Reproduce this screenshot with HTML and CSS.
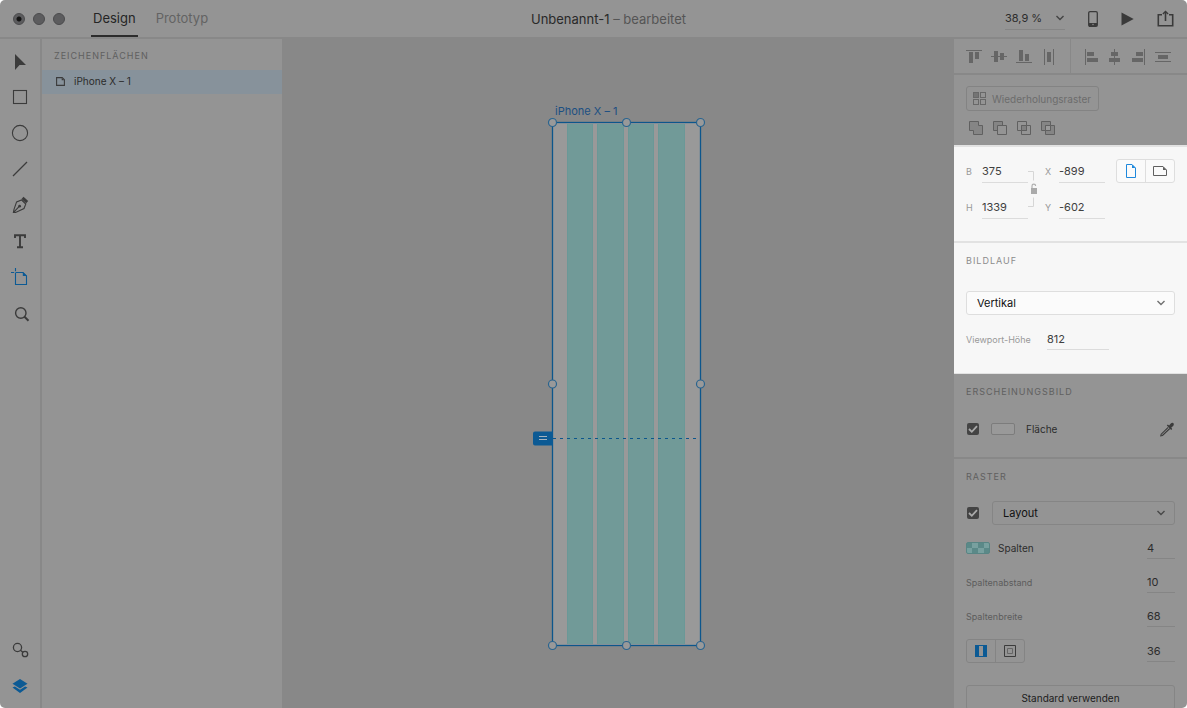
FILE: index.html
```html
<!DOCTYPE html>
<html lang="de">
<head>
<meta charset="utf-8">
<title>Unbenannt-1 – bearbeitet</title>
<link rel="stylesheet" href="styles.css">
</head>
<body>
<div class="window">
  <header class="topbar">
    <div class="topbar-left">
      <div class="lights">
        <button class="light light-edited" aria-label="Schließen"></button>
        <button class="light" aria-label="Minimieren"></button>
        <button class="light" aria-label="Vergrößern"></button>
      </div>
      <nav class="tabs">
        <button class="tab tab-active">Design</button>
        <button class="tab">Prototyp</button>
      </nav>
    </div>
    <h1 class="doc-title">Unbenannt-1 <span class="doc-state">– bearbeitet</span></h1>
    <div class="topbar-right">
      <button class="zoom" aria-label="Zoom">38,9 %
        <svg width="10" height="6" viewBox="0 0 10 6"><path d="M1.500 1 5 4.500 8.500 1" fill="none" stroke="#444" stroke-width="1.400"/></svg>
      </button>
      <button class="top-icon" aria-label="Gerätevorschau">
        <svg width="10" height="16" viewBox="0 0 10 16"><rect x=".7" y=".7" width="8.600" height="14.600" rx="1.300" fill="none" stroke="#3a3a3a" stroke-width="1.300"/><path d="M1 12h8v3H1z" fill="#3a3a3a"/><circle cx="5" cy="13.500" r=".7" fill="#999"/></svg>
      </button>
      <button class="top-icon" aria-label="Vorschau">
        <svg width="13" height="14" viewBox="0 0 13 14"><path d="M.5.5 12.700 7 .5 13.500z" fill="#3a3a3a"/></svg>
      </button>
      <button class="top-icon" aria-label="Freigeben">
        <svg width="17" height="17" viewBox="0 0 17 17" fill="none" stroke="#3a3a3a" stroke-width="1.600"><path d="M5 4.800H1.300v10.900h14.400V4.800H12M8.500 11V2"/><path d="M5.900 4.100 8.500 1.400l2.600 2.700" stroke-width="1.400"/></svg>
      </button>
    </div>
  </header>

  <div class="workspace">
    <aside class="tools">
      <div class="tool-group">
        <button class="tool" aria-label="Auswahl"><svg width="22" height="22" viewBox="0 0 22 22"><path d="M6 4v16l4.500-5H17z" fill="#3b3b3b"/></svg></button>
        <button class="tool" aria-label="Rechteck"><svg width="22" height="22" viewBox="0 0 22 22"><rect x="4.500" y="4.500" width="13" height="13" fill="none" stroke="#3b3b3b" stroke-width="1.100"/></svg></button>
        <button class="tool" aria-label="Ellipse"><svg width="22" height="22" viewBox="0 0 22 22"><circle cx="11" cy="11" r="7.600" fill="none" stroke="#3b3b3b" stroke-width="1.100"/></svg></button>
        <button class="tool" aria-label="Linie"><svg width="22" height="22" viewBox="0 0 22 22"><path d="M4 18 18 4" stroke="#3b3b3b" stroke-width="1.200"/></svg></button>
        <button class="tool" aria-label="Stift"><svg width="22" height="22" viewBox="0 0 22 22"><path d="m12.500 5 2-2.200 4.700 4.300-2 2.200z" fill="#3b3b3b"/><path d="m12.600 6 4.200 4-1.800 4.500-8.400 3.900-2.200.1.600-3.100 2.600-7.500zM4.800 18.200l5-5.400" fill="none" stroke="#3b3b3b" stroke-width="1.100"/><circle cx="10.600" cy="12.200" r="1.400" fill="#3b3b3b"/></svg></button>
        <button class="tool" aria-label="Text"><svg width="22" height="22" viewBox="0 0 22 22" fill="none" stroke="#3b3b3b" stroke-width="1.900"><path d="M6 8V5.200h10V8M11 5v12.500M8 17.200h6"/></svg></button>
        <button class="tool" aria-label="Zeichenfläche"><svg width="22" height="22" viewBox="0 0 22 22"><path d="M6.500 2v3.200M2 6.500h3.200M6.500 7v11.500h11V10L14 6.500H6.500" fill="none" stroke="#0c5a94" stroke-width="1.100"/><path d="m13.800 6 4.200 4h-4.200z" fill="#0c5a94"/></svg></button>
        <button class="tool" aria-label="Zoom"><svg width="22" height="22" viewBox="0 0 22 22" fill="none" stroke="#3b3b3b"><circle cx="11.800" cy="11" r="5.200" stroke-width="1.400"/><path d="m15.500 14.800 4 4" stroke-width="2"/></svg></button>
      </div>
      <div class="tool-group">
        <button class="tool" aria-label="Symbole"><svg width="22" height="22" viewBox="0 0 22 22" fill="none" stroke="#3b3b3b" stroke-width="1.300"><circle cx="8.500" cy="8.500" r="4.100"/><circle cx="16" cy="15" r="2.700"/><path d="m11.500 11.200 2.600 2.200"/></svg></button>
        <button class="tool" aria-label="Ebenen"><svg width="22" height="22" viewBox="0 0 22 22" fill="#0c5a94"><path d="m11 4 7.500 4.700L11 13.400 3.500 8.700z"/><path d="m3.500 12.500 2.400-1 5.100 3.300 5.100-3.300 2.400 1L11 18z"/></svg></button>
      </div>
    </aside>

    <aside class="layers">
      <h2 class="heading layers-heading">ZEICHENFLÄCHEN</h2>
      <button class="layer">
        <svg width="9" height="9" viewBox="0 0 9 9"><path d="M.6.600h5.600l2.200 2.200v5.600H.6z" fill="none" stroke="#3b3b3b" stroke-width="1.100"/><path d="M5.700 1v2.300H8z" fill="#3b3b3b"/></svg>
        iPhone X – 1
      </button>
    </aside>

    <main class="canvas">
      <div class="artboard">
        <span class="artboard-name">iPhone X – 1</span>
        <svg class="artboard-art" width="173" height="534" viewBox="0 0 173 534">
          <rect x="19.500" y="5.500" width="148" height="523" fill="#999"/>
          <g fill="#719a98"><rect x="34" y="7" width="26" height="520"/><rect x="64" y="7" width="27" height="520"/><rect x="95" y="7" width="26" height="520"/><rect x="125" y="7" width="27" height="520"/></g>
          <g stroke="#679797"><path d="M34.500 7v520M59.500 7v520M64.500 7v520M90.500 7v520M95.500 7v520M120.500 7v520M125.500 7v520M151.500 7v520" opacity=".6"/></g>
          <rect x="19.500" y="5.500" width="148" height="523" fill="none" stroke="#0c568c" stroke-width="1.300"/>
          <path d="M20 321.500h144" stroke="#0c568c" stroke-dasharray="3 4"/>
          <path d="M2 314.500h18v14H2a2 2 0 0 1-2-2v-10a2 2 0 0 1 2-2z" fill="#0c5a94"/>
          <path d="M6 319.500h8M6 322.500h8" stroke="#a5b3bd"/>
          <g fill="#999" stroke="#2a648f" stroke-width="1.200"><circle cx="19.500" cy="5.500" r="4"/><circle cx="93.500" cy="5.500" r="4"/><circle cx="167.500" cy="5.500" r="4"/><circle cx="19.500" cy="267" r="4"/><circle cx="167.500" cy="267" r="4"/><circle cx="19.500" cy="528.500" r="4"/><circle cx="93.500" cy="528.500" r="4"/><circle cx="167.500" cy="528.500" r="4"/></g>
        </svg>
      </div>
    </main>

    <aside class="inspector">
      <div class="align-bar">
        <div class="align-group">
          <button class="align" aria-label="Oben ausrichten"><svg width="16" height="16" viewBox="0 0 16 16"><path d="M0 1h16v1H0zM3 3h4v11H3zM9 3h4v7H9z"/></svg></button>
          <button class="align" aria-label="Vertikal zentrieren"><svg width="16" height="16" viewBox="0 0 16 16"><path d="M0 7h16v1H0zM3 2h4v11H3zM9 4h4v7H9z"/></svg></button>
          <button class="align" aria-label="Unten ausrichten"><svg width="16" height="16" viewBox="0 0 16 16"><path d="M0 13h16v1H0zM3 1h4v11H3zM9 5h4v7H9z"/></svg></button>
          <button class="align" aria-label="Horizontal verteilen"><svg width="16" height="16" viewBox="0 0 16 16"><path d="M3 0h1v16H3zM12 0h1v16h-1zM6 3h4v10H6z"/></svg></button>
        </div>
        <div class="align-group align-group-end">
          <button class="align" aria-label="Links ausrichten"><svg width="16" height="16" viewBox="0 0 16 16"><path d="M2 0h1v16H2zM4 3h7v4H4zM4 9h11v4H4z"/></svg></button>
          <button class="align" aria-label="Horizontal zentrieren"><svg width="16" height="16" viewBox="0 0 16 16"><path d="M7 0h1v16H7zM4 3h7v4H4zM2 9h11v4H2z"/></svg></button>
          <button class="align" aria-label="Rechts ausrichten"><svg width="16" height="16" viewBox="0 0 16 16"><path d="M13 0h1v16h-1zM5 3h7v4H5zM1 9h11v4H1z"/></svg></button>
          <button class="align" aria-label="Vertikal verteilen"><svg width="16" height="16" viewBox="0 0 16 16"><path d="M0 3h16v1H0zM0 12h16v1H0zM3 6h10v4H3z"/></svg></button>
        </div>
      </div>

      <section class="section section-repeat">
        <button class="repeat" disabled>
          <svg width="13" height="13" viewBox="0 0 13 13" fill="none" stroke="#686868"><rect x=".5" y=".5" width="5" height="5" fill="#747474"/><rect x="7.500" y=".5" width="5" height="5"/><rect x=".5" y="7.500" width="5" height="5"/><rect x="7.500" y="7.500" width="5" height="5"/></svg>
          Wiederholungsraster
        </button>
        <div class="booleans">
          <button class="boolean" aria-label="Addieren"><svg width="14" height="14" viewBox="0 0 14 14"><path d="M.5.500h9v4h4v9h-9v-4h-4z" fill="#858585" stroke="#606060"/></svg></button>
          <button class="boolean" aria-label="Subtrahieren"><svg width="14" height="14" viewBox="0 0 14 14" stroke="#606060"><path d="M.5.500h9v9h-9z" fill="#858585"/><path d="M4.500 4.500h9v9h-9z" fill="#949494"/></svg></button>
          <button class="boolean" aria-label="Schnittmenge"><svg width="14" height="14" viewBox="0 0 14 14" fill="none" stroke="#606060"><path d="M.5.500h9v9h-9zM4.500 4.500h9v9h-9z"/><path d="M4.500 4.500h5v5h-5z" fill="#808080"/></svg></button>
          <button class="boolean" aria-label="Überlappung ausschließen"><svg width="14" height="14" viewBox="0 0 14 14" stroke="#606060"><path d="M.5.500h9v9h-9zM4.500 4.500h9v9h-9z" fill="#858585"/><path d="M4.500 4.500h5v5h-5z" fill="#9a9a9a"/></svg></button>
        </div>
      </section>

      <div class="spotlight">
        <section class="section section-size">
          <div class="size-grid">
            <label class="axis" for="w">B</label><input class="field" id="w" value="375">
            <svg class="link" width="17" height="48" viewBox="0 0 17 48"><path d="M0 12.500h5.500v9M0 47.500h5.500v-9" fill="none" stroke="#d6d6d6"/><path d="M3 29h6v6H3z" fill="#aaa"/><path d="M4 29v-2a1.800 1.800 0 0 1 3.600 0" fill="none" stroke="#b0b0b0" stroke-width="1.200"/></svg>
            <label class="axis" for="x">X</label><input class="field" id="x" value="-899">
            <label class="axis" for="h">H</label><input class="field" id="h" value="1339">
            <label class="axis" for="y">Y</label><input class="field" id="y" value="-602">
          </div>
          <div class="segmented">
            <button class="segment" aria-label="Hochformat"><svg width="10" height="14" viewBox="0 0 10 14"><path d="M.5.500H6L9.500 4v9.500h-9z" fill="none" stroke="#1e88dc"/><path d="M6 .500V4h3.500z" fill="#1e88dc"/></svg></button>
            <button class="segment" aria-label="Querformat"><svg width="14" height="10" viewBox="0 0 14 10"><path d="M.5.500H10L13.500 4v5.500H.5z" fill="none" stroke="#606060"/><path d="M10 .500V4h3.500z" fill="#606060"/></svg></button>
          </div>
        </section>
        <section class="section section-scroll">
          <h2 class="heading">BILDLAUF</h2>
          <select class="select" aria-label="Bildlauf"><option>Vertikal</option></select>
          <div class="viewport-row">
            <label class="caption" for="vp">Viewport-Höhe</label>
            <input class="field field-wide" id="vp" value="812">
          </div>
        </section>
      </div>

      <section class="section section-look">
        <h2 class="heading">ERSCHEINUNGSBILD</h2>
        <div class="look-row">
          <input class="check" type="checkbox" id="fill" checked>
          <span class="swatch"></span>
          <label class="label" for="fill">Fläche</label>
          <button class="picker" aria-label="Pipette"><svg width="16" height="16" viewBox="0 0 16 16"><path d="m9.200 6.300-7 6.900-.4 1.600 1.700-.3 7.300-7" fill="none" stroke="#3b3b3b" stroke-width="1.100"/><path d="m7.800 4.500 1-1 1.300.9 1.700-1.900c2-1.900 4.200.400 2.400 2.400L12.300 6.600l.9 1.400-1 1z" fill="#3b3b3b"/></svg></button>
        </div>
      </section>

      <section class="section section-grid">
        <h2 class="heading">RASTER</h2>
        <div class="grid-type">
          <input class="check" type="checkbox" aria-label="Raster" checked>
          <select class="select" aria-label="Rastertyp"><option>Layout</option></select>
        </div>
        <div class="grid-row">
          <span class="checker"></span>
          <label class="label" for="cols">Spalten</label>
          <input class="field field-short" id="cols" value="4">
        </div>
        <div class="grid-row">
          <label class="caption" for="gutter">Spaltenabstand</label>
          <input class="field field-short" id="gutter" value="10">
        </div>
        <div class="grid-row">
          <label class="caption" for="colw">Spaltenbreite</label>
          <input class="field field-short" id="colw" value="68">
        </div>
        <div class="grid-row">
          <div class="segmented">
            <button class="segment" aria-label="Verknüpfte Ränder"><svg width="12" height="12" viewBox="0 0 12 12"><path d="M0 0h12v12H0zM4 1v10h4V1z" fill="#0c5a94" fill-rule="evenodd"/></svg></button>
            <button class="segment" aria-label="Einzelne Ränder"><svg width="12" height="12" viewBox="0 0 12 12" fill="none"><path d="M.5.500h11v11H.5z" stroke="#3b3b3b"/><path d="M3.500 3.500h5v5h-5z" stroke="#666"/></svg></button>
          </div>
          <input class="field field-short" aria-label="Rand" value="36">
        </div>
        <button class="default">Standard verwenden</button>
      </section>
    </aside>
  </div>
</div>
</body>
</html>
```

FILE: styles.css
```css
* { box-sizing: border-box; }

body {
  margin: 0;
  background: #fff;
  font-family: Inter, "Liberation Sans", sans-serif;
  font-size: 11px;
  color: #2c2c2c;
}

button, input, select {
  margin: 0;
  padding: 0;
  border: 0;
  background: none;
  font: inherit;
  color: inherit;
  outline: 0;
}

svg { display: block; flex: none; }
h1, h2 { margin: 0; font-weight: 400; }

.window {
  display: flex;
  flex-direction: column;
  height: 100vh;
  overflow: hidden;
  border-radius: 5px;
  background: #949494;
}

/* Title bar */
.topbar {
  display: grid;
  grid-template-columns: 1fr auto 1fr;
  align-items: center;
  flex: none;
  height: 39px;
  padding: 0 13px;
  border-bottom: 2px solid #888;
  font-size: 13px;
}

.topbar-left, .lights, .tabs, .topbar-right { display: flex; align-items: center; }
.topbar-left { gap: 26px; }
.lights { gap: 8px; }

.light {
  width: 12px;
  height: 12px;
  border: 1px solid #4b4b4d;
  border-radius: 50%;
  background: #5c5c5e;
}

.light-edited { background: radial-gradient(circle, #141414 0 2px, #5c5c5e 3px); }

.tabs { gap: 16px; }
.tab { height: 37px; padding: 0 2px; border-bottom: 2px solid transparent; color: #636363; }
.tab-active { border-color: #2c2c2c; color: #252525; }
.doc-title { padding-left: 30px; font-size: 13px; color: #292929; }
.doc-state { color: #555; }

.topbar-right { justify-content: flex-end; gap: 23px; }
.zoom {
  display: flex;
  align-items: center;
  justify-content: space-between;
  width: 60px;
  height: 22px;
  border-bottom: 1px solid #858585;
  font-size: 11px;
}

/* Workspace */
.workspace { display: flex; flex: 1; min-height: 0; }

.tools {
  display: flex;
  flex-direction: column;
  justify-content: space-between;
  flex: none;
  width: 42px;
  padding: 11px 0 11px 9px;
  border-right: 2px solid #888;
}

.tool-group { display: flex; flex-direction: column; gap: 14px; }
.tool { width: 22px; height: 22px; }

.layers { flex: none; width: 240px; }

.heading {
  font-size: 9px;
  line-height: 20px;
  letter-spacing: 1px;
  color: #606060;
}

.layers-heading { padding: 7px 12px 4px; }

.layer {
  display: flex;
  align-items: center;
  gap: 9px;
  width: 100%;
  height: 24px;
  padding: 0 14px 2px;
  background: #87929b;
  font-size: 10px;
}

.canvas { position: relative; flex: 1; min-width: 0; overflow: hidden; background: #888; }

.artboard {
  position: absolute;
  left: 251px;
  top: 66px;
  display: flex;
  flex-direction: column;
}

.artboard-name { padding-left: 22px; line-height: 12px; font-size: 11px; color: #1c4f82; }

/* Inspector */
.inspector {
  display: flex;
  flex-direction: column;
  flex: none;
  width: 233px;
  overflow: hidden;
}

.align-bar { display: flex; flex: none; height: 36px; border-bottom: 2px solid #888; }
.align-group { display: flex; align-items: center; gap: 9px; padding: 2px 0 0 12px; }
.align-group:first-child { width: 117px; border-right: 1px solid #888; }
.align-group-end { gap: 8px; }
.align-group svg { fill: #666; }
.align { width: 16px; height: 16px; }

.section { flex: none; padding: 0 12px; }

.section-repeat { display: flex; flex-direction: column; gap: 10px; height: 70px; padding-top: 11px; }

.repeat {
  display: flex;
  align-items: center;
  align-self: flex-start;
  gap: 6px;
  height: 25px;
  padding: 0 7px 0 6px;
  border: 1px solid #838383;
  border-radius: 3px;
  font-size: 10px;
  color: #6c6c6c;
}

.booleans { display: flex; gap: 10px; padding-left: 3px; }
.boolean { width: 14px; height: 14px; }

.spotlight {
  flex: none;
  background: #f7f7f7;
  border-top: 2px solid #e2e2e2;
  border-bottom: 1px solid #e2e2e2;
  color: #404040;
}

.section-size {
  display: flex;
  justify-content: space-between;
  height: 96px;
  padding-top: 12px;
  border-bottom: 2px solid #e2e2e2;
}

.size-grid {
  display: grid;
  grid-template-columns: 16px 46px 17px 14px 46px;
  grid-template-rows: 24px 24px;
  row-gap: 12px;
  align-items: center;
  height: 60px;
}

.link { grid-area: 1 / 3 / 3 / 4; align-self: start; }
.axis { font-size: 9px; color: #999; }

.field {
  width: 100%;
  height: 22px;
  border-bottom: 1px solid #858585;
  font-size: 11px;
}

.size-grid .field { height: 24px; }
.spotlight .field { border-color: #dcdcdc; }
.field-wide { width: 62px; }
.field-short { width: 28px; margin-left: auto; }

.segmented {
  display: flex;
  width: 59px;
  height: 24px;
  border: 1px solid #848484;
  border-radius: 3px;
}

.segment { display: flex; align-items: center; justify-content: center; flex: 1; }
.segment + .segment { border-left: 1px solid #848484; }
.spotlight .segmented, .spotlight .segment { border-color: #dedede; }
.spotlight .segmented { background: #fafafa; }

.spotlight .heading { color: #8c8c8c; }
.section-scroll { height: 130px; padding-top: 8px; }

.select {
  display: block;
  width: 100%;
  height: 24px;
  padding: 0 10px;
  border: 1px solid #858585;
  border-radius: 3px;
  appearance: none;
  background: no-repeat right 8px center url("data:image/svg+xml,%3Csvg xmlns='http://www.w3.org/2000/svg' width='10' height='6'%3E%3Cpath d='M1.500 1 5 4.500 8.500 1' fill='none' stroke='%23484848' stroke-width='1.400'/%3E%3C/svg%3E");
  color: #111;
}

.spotlight .select {
  margin-top: 20px;
  border-color: #dedede;
  background-color: #fbfbfb;
  background-image: url("data:image/svg+xml,%3Csvg xmlns='http://www.w3.org/2000/svg' width='10' height='6'%3E%3Cpath d='M1.500 1 5 4.500 8.500 1' fill='none' stroke='%23707070' stroke-width='1.400'/%3E%3C/svg%3E");
}

.viewport-row { display: flex; align-items: center; gap: 15px; margin-top: 13px; }
.viewport-row .caption { width: 66px; white-space: nowrap; }
.caption { font-size: 9px; color: #5c5c5c; }
.spotlight .caption { color: #999; }
.label { font-size: 10px; }

.section-look { height: 85px; padding-top: 8px; border-bottom: 2px solid #888; }
.look-row { display: flex; align-items: center; height: 24px; margin-top: 15px; }
.look-row .label { margin-left: 11px; }
.picker { width: 16px; height: 16px; margin-left: auto; }

.check {
  flex: none;
  width: 12px;
  height: 12px;
  margin-left: 1px;
  border-radius: 2px;
  appearance: none;
  background: #444 center / 10px 10px no-repeat url("data:image/svg+xml,%3Csvg xmlns='http://www.w3.org/2000/svg' viewBox='0 0 10 10'%3E%3Cpath d='M1 5 3.800 7.800 9 2.200' fill='none' stroke='%23aaa' stroke-width='1.800'/%3E%3C/svg%3E");
}

.swatch {
  width: 24px;
  height: 12px;
  margin-left: 12px;
  border: 1px solid #7c7c7c;
  border-radius: 2px;
  background: #999;
}

.section-grid { display: flex; flex-direction: column; gap: 12px; padding-top: 8px; }
.grid-type { display: flex; align-items: center; gap: 13px; margin-top: 2px; }
.grid-row { display: flex; align-items: center; gap: 8px; min-height: 22px; }

.checker {
  width: 24px;
  height: 12px;
  border: 1px solid #588584;
  border-radius: 2px;
  background: conic-gradient(#78a09f 25%, #5b8988 0 50%, #78a09f 0 75%, #5b8988 0) -1px -1px / 12px 12px;
}

.default {
  height: 25px;
  margin-top: 10px;
  border: 1px solid #858585;
  border-radius: 3px;
  font-size: 10px;
  color: #1c1c1c;
}
```
